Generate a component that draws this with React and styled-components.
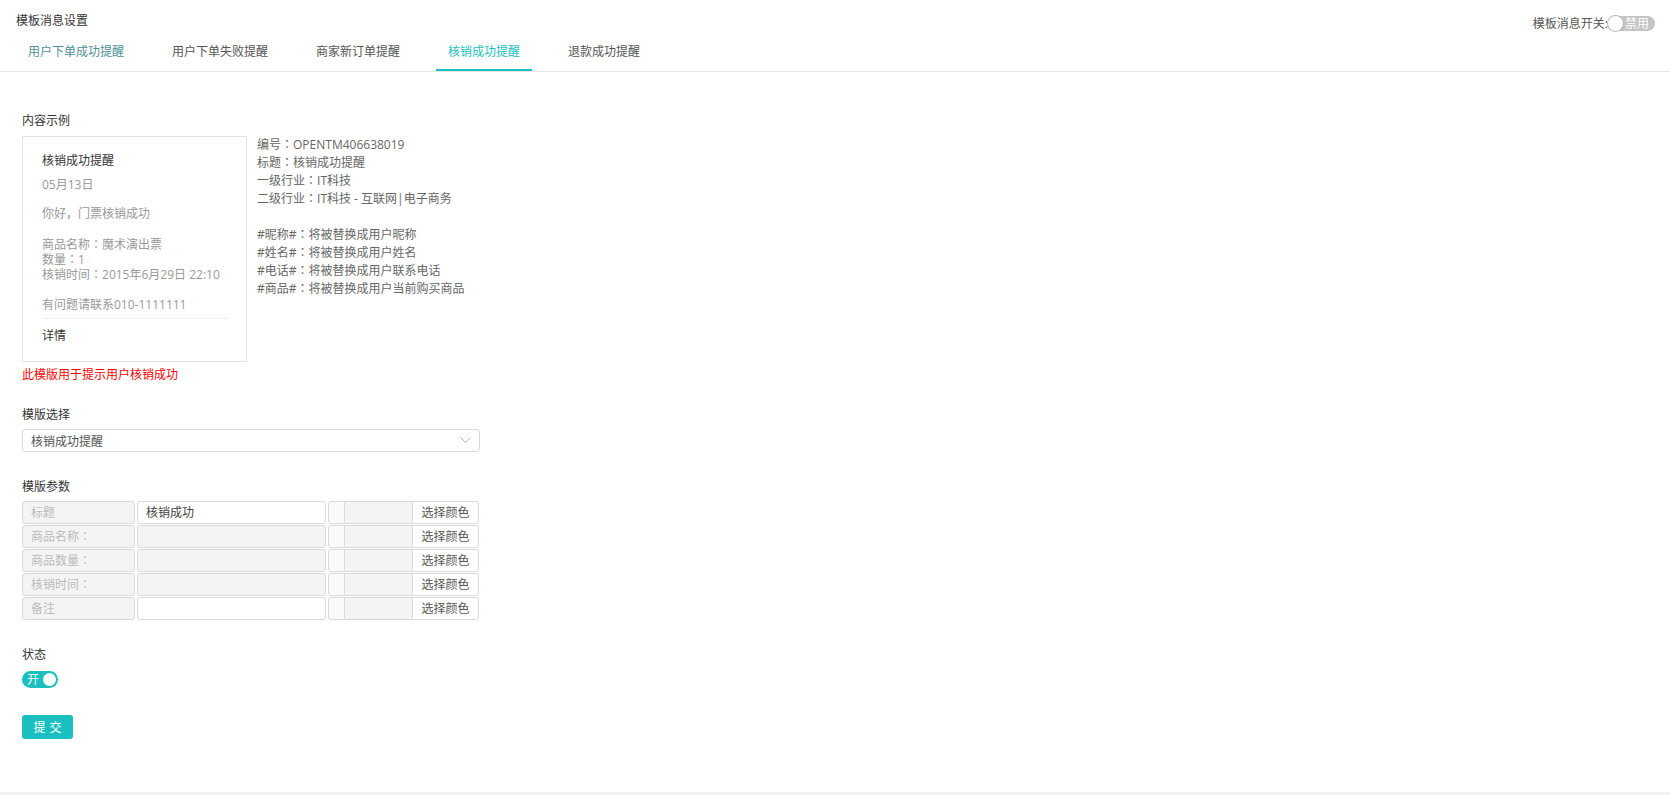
import React from 'react'
import styled, { createGlobalStyle } from 'styled-components'

const teal = '#1abfc0'

const GlobalStyle = createGlobalStyle`
  html, body {
    margin: 0;
    padding: 0;
    background: #f0f1f5;
  }
  body {
    font-family: "Open Sans", "Noto Sans CJK SC", sans-serif;
    font-size: 12px;
    color: #333;
  }
  * {
    box-sizing: border-box;
  }
`

const Page = styled.div`
  background: #fff;
  height: 792px;
`

const Header = styled.div`
  padding: 0 15px 0 16px;
  border-bottom: 1px solid #e6e6e6;
`

const TopRow = styled.div`
  display: flex;
  justify-content: space-between;
  align-items: center;
  height: 42px;
`

const PageTitle = styled.div`
  line-height: 18px;
  color: #333;
`

const SwitchGroup = styled.div`
  display: flex;
  align-items: center;
  margin-top: 5px;
  color: #555;
  line-height: 16px;
`

const Toggle = styled.div`
  position: relative;
  display: flex;
  align-items: center;
  width: ${(p) => p.w}px;
  height: ${(p) => p.h}px;
  border-radius: ${(p) => p.h / 2}px;
  background: ${(p) => (p.on ? teal : '#c4c4c4')};
  color: #fff;
  font-size: 12px;
  line-height: ${(p) => p.h}px;
  justify-content: ${(p) => (p.on ? 'flex-start' : 'flex-end')};
  padding: ${(p) => (p.on ? '0 0 0 5px' : '0 6px 0 0')};
`

const Knob = styled.span`
  position: absolute;
  top: ${(p) => p.inset}px;
  ${(p) => (p.right ? `right: ${p.inset}px;` : `left: ${p.inset}px;`)}
  width: ${(p) => p.size}px;
  height: ${(p) => p.size}px;
  border-radius: 50%;
  background: #fff;
  box-shadow: 0 0 0 1px ${(p) => (p.right ? 'transparent' : '#b8b8b8')};
`

const Tabs = styled.div`
  display: flex;
`

const Tab = styled.div`
  padding: 2px 12px 9px;
  margin-right: 24px;
  line-height: 16px;
  color: ${(p) => (p.active ? teal : p.visited ? '#4e9296' : '#555')};
  border-bottom: 2px solid ${(p) => (p.active ? teal : 'transparent')};
`

const Content = styled.div`
  padding: 40px 0 0 22px;
`

const SectionLabel = styled.div`
  line-height: 18px;
  color: #333;
  margin-top: ${(p) => p.mt || 0}px;
`

const Example = styled.div`
  display: flex;
  margin-top: 6px;
`

const Card = styled.div`
  width: 225px;
  border: 1px solid #e3e3e3;
  padding: 15px 18px 16px 19px;
`

const CardLine = styled.div`
  line-height: ${(p) => p.lh || 18}px;
  margin-top: ${(p) => p.mt || 0}px;
  color: ${(p) => (p.dark ? '#333' : '#999')};
`

const Divider = styled.div`
  height: 1px;
  background: #eee;
  margin-top: 4px;
`

const Info = styled.div`
  margin-left: 10px;
  color: #666;
  line-height: 18px;
`

// full-width colon drawn centred, as in the original font
const Colon = styled.span`
  font-family: "Noto Sans CJK TC", "Noto Sans CJK SC", sans-serif;
  line-height: 1;
`

const Hint = styled.div`
  color: #ff0000;
  line-height: 18px;
  margin-top: 4px;
`

const Select = styled.div`
  display: flex;
  align-items: center;
  justify-content: space-between;
  width: 458px;
  height: 23px;
  margin-top: 5px;
  padding: 0 8px 0 8px;
  border: 1px solid #d9d9d9;
  border-radius: 3px;
  color: #555;
`

const ParamTable = styled.div`
  margin-top: 5px;
  width: 457px;
`

const ParamRow = styled.div`
  display: flex;
  height: 23px;
  margin-bottom: 1px;
`

const LabelCell = styled.div`
  width: 113px;
  border: 1px solid #dadada;
  border-radius: 3px;
  background: #f4f4f4;
  padding-left: 8px;
  line-height: 21px;
  color: #bbb;
`

const ValueCell = styled.div`
  width: 189px;
  margin-left: 2px;
  border: 1px solid #dadada;
  border-radius: 3px;
  background: ${(p) => (p.disabled ? '#f4f4f4' : '#fff')};
  padding-left: 8px;
  line-height: 21px;
  color: #444;
`

const SwatchCell = styled.div`
  width: 17px;
  margin-left: 2px;
  border: 1px solid #dadada;
  border-radius: 3px 0 0 3px;
  background: #fafafa;
`

const ColorCell = styled.div`
  width: 67px;
  border-top: 1px solid #dadada;
  border-bottom: 1px solid #dadada;
  background: #f4f4f4;
`

const ColorButton = styled.div`
  width: 67px;
  border: 1px solid #dadada;
  border-radius: 0 3px 3px 0;
  background: #fff;
  text-align: center;
  line-height: 21px;
  color: #555;
`

const StatusToggle = styled.div`
  margin-top: 7px;
`

const SubmitButton = styled.button`
  display: block;
  margin-top: 27px;
  width: 51px;
  height: 24px;
  border: none;
  border-radius: 3px;
  background: ${teal};
  color: #fff;
  font-family: inherit;
  font-size: 12px;
  letter-spacing: 4px;
  padding: 0 0 0 4px;
`

const tabs = ['用户下单成功提醒', '用户下单失败提醒', '商家新订单提醒', '核销成功提醒', '退款成功提醒']

const params = [
  { label: '标题', value: '核销成功', disabled: false },
  { label: '商品名称：', value: '', disabled: true },
  { label: '商品数量：', value: '', disabled: true },
  { label: '核销时间：', value: '', disabled: true },
  { label: '备注', value: '', disabled: false },
]

const infoLines = [
  '编号：OPENTM406638019',
  '标题：核销成功提醒',
  '一级行业：IT科技',
  '二级行业：IT科技 - 互联网|电子商务',
  '\u00a0',
  '#昵称#：将被替换成用户昵称',
  '#姓名#：将被替换成用户姓名',
  '#电话#：将被替换成用户联系电话',
  '#商品#：将被替换成用户当前购买商品',
]

const withColon = (text) =>
  text.split('：').map((part, i) => (
    <React.Fragment key={i}>
      {i > 0 && <Colon>：</Colon>}
      {part}
    </React.Fragment>
  ))

export default function App() {
  return (
    <Page>
      <GlobalStyle />
      <Header>
        <TopRow>
          <PageTitle>模板消息设置</PageTitle>
          <SwitchGroup>
            模板消息开关:
            <Toggle w={47} h={15}>
              <Knob size={15} inset={0} />
              禁用
            </Toggle>
          </SwitchGroup>
        </TopRow>
        <Tabs>
          {tabs.map((t, i) => (
            <Tab key={t} active={i === 3} visited={i === 0}>
              {t}
            </Tab>
          ))}
        </Tabs>
      </Header>

      <Content>
        <SectionLabel>内容示例</SectionLabel>
        <Example>
          <Card>
            <CardLine dark>核销成功提醒</CardLine>
            <CardLine mt={6}>05月13日</CardLine>
            <CardLine mt={11}>你好，门票核销成功</CardLine>
            <CardLine mt={14} lh={15}>
              {withColon('商品名称：魔术演出票')}
              <br />
              {withColon('数量：1')}
              <br />
              {withColon('核销时间：2015年6月29日 22:10')}
            </CardLine>
            <CardLine mt={14}>有问题请联系010-1111111</CardLine>
            <Divider />
            <CardLine mt={8} dark>
              详情
            </CardLine>
          </Card>
          <Info>
            {infoLines.map((l, i) => (
              <div key={i}>{withColon(l)}</div>
            ))}
          </Info>
        </Example>
        <Hint>此模版用于提示用户核销成功</Hint>

        <SectionLabel mt={22}>模版选择</SectionLabel>
        <Select>
          核销成功提醒
          <svg width="11" height="7" viewBox="0 0 11 7">
            <polyline points="0.5,0.5 5.5,5.5 10.5,0.5" fill="none" stroke="#b5b5b5" strokeWidth="1" />
          </svg>
        </Select>

        <SectionLabel mt={26}>模版参数</SectionLabel>
        <ParamTable>
          {params.map((p) => (
            <ParamRow key={p.label}>
              <LabelCell>{withColon(p.label)}</LabelCell>
              <ValueCell disabled={p.disabled}>{p.value}</ValueCell>
              <SwatchCell />
              <ColorCell />
              <ColorButton>选择颜色</ColorButton>
            </ParamRow>
          ))}
        </ParamTable>

        <SectionLabel mt={26}>状态</SectionLabel>
        <StatusToggle>
          <Toggle on w={36} h={17}>
            开
            <Knob size={13} inset={2} right />
          </Toggle>
        </StatusToggle>

        <SubmitButton>提交</SubmitButton>
      </Content>
    </Page>
  )
}
